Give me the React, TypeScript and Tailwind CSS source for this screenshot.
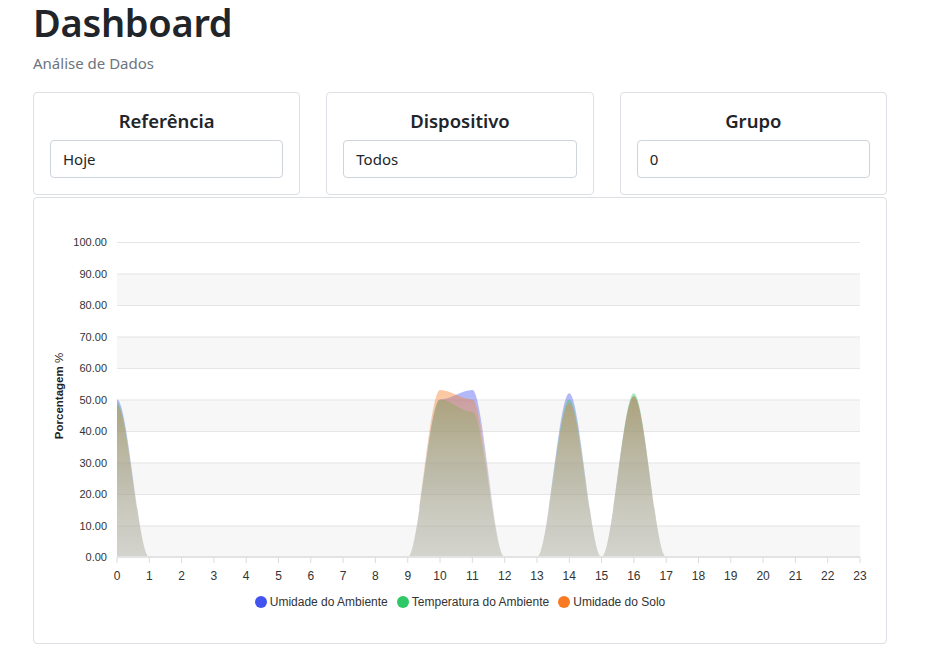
import React from "react";

const sans = "font-['Noto_Sans','Open_Sans',sans-serif]";

const series = [
  { name: "Umidade do Ambiente", color: "#4353f0", data: { 0: 50, 10: 50, 11: 53, 14: 52, 16: 51 } as Record<number, number> },
  { name: "Temperatura do Ambiente", color: "#2ec866", data: { 0: 49, 10: 50, 11: 46, 14: 50, 16: 52 } as Record<number, number> },
  { name: "Umidade do Solo", color: "#f97a22", data: { 0: 48, 10: 53, 11: 50, 14: 49, 16: 51 } as Record<number, number> },
];

const hours = Array.from({ length: 24 }, (_, i) => i);
const px = (h: number) => 83 + (h * 743) / 23;
const py = (v: number) => 359 - v * 3.15;

function areaPath(data: Record<number, number>) {
  const pts = hours.map((h) => [px(h), py(data[h] ?? 0)]);
  let d = `M ${pts[0][0]} ${py(0)} L ${pts[0][0]} ${pts[0][1]}`;
  for (let i = 0; i < pts.length - 1; i++) {
    const [x0, y0] = pts[i];
    const [x1, y1] = pts[i + 1];
    const dx = (x1 - x0) / 3;
    d += ` C ${x0 + dx} ${y0} ${x1 - dx} ${y1} ${x1} ${y1}`;
  }
  d += ` L ${pts[pts.length - 1][0]} ${py(0)} Z`;
  return d;
}

function Chart() {
  const ticks = [0, 10, 20, 30, 40, 50, 60, 70, 80, 90, 100];
  return (
    <svg width="852" height="395" className="block" fontFamily="'Liberation Sans', Arial, sans-serif">
      <defs>
        {series.map((s, i) => (
          <linearGradient key={i} id={`g${i}`} x1="0" y1="0" x2="0" y2="1" gradientUnits="objectBoundingBox">
            <stop offset="0" stopColor={s.color} stopOpacity="0.42" />
            <stop offset="1" stopColor="#b4b4a8" stopOpacity="0.22" />
          </linearGradient>
        ))}
      </defs>
      {[0, 20, 40, 60, 80].map((v) => (
        <rect key={v} x={83} y={py(v + 10)} width={743} height={31.5} fill="#f7f7f7" />
      ))}
      {ticks.map((v) => (
        <line key={v} x1={83} x2={826} y1={py(v) + 0.5} y2={py(v) + 0.5} stroke="#e6e6e6" />
      ))}
      {series.map((s, i) => (
        <path key={s.name} d={areaPath(s.data)} fill={`url(#g${i})`} />
      ))}
      <line x1={83} x2={826} y1={359} y2={359} stroke="#e3e3e3" strokeWidth="2" />
      {hours.map((h) => (
        <line key={h} x1={px(h)} x2={px(h)} y1={359} y2={365} stroke="#dcdcdc" />
      ))}
      {ticks.map((v) => (
        <text key={v} x={73} y={py(v) + 4} fontSize="11" fill="#333" textAnchor="end">
          {v.toFixed(2)}
        </text>
      ))}
      {hours.map((h) => (
        <text key={h} x={px(h)} y={382} fontSize="12" fill="#333" textAnchor="middle">
          {h}
        </text>
      ))}
      <text x={29} y={198} fontSize="11.5" fill="#222" textAnchor="middle" transform="rotate(-90 29 198)">
        <tspan fontWeight="bold">Porcentagem</tspan>
        <tspan> %</tspan>
      </text>
    </svg>
  );
}

const filters = [
  { title: "Referência", value: "Hoje" },
  { title: "Dispositivo", value: "Todos" },
  { title: "Grupo", value: "0" },
];

export default function App() {
  return (
    <div className={`${sans} bg-white min-h-[670px] pl-[33px] pt-[2px] text-[#212529]`}>
      <div className="w-[854px]">
        {/* Header */}
        <h1 className="text-[38px] leading-[40px] font-semibold tracking-[-0.3px]">Dashboard</h1>
        <p className="mt-[11px] text-[15px] leading-[20px] text-[#6c757d]">Análise de Dados</p>

        {/* Filtros */}
        <div className="mt-[19px] grid grid-cols-3 gap-[26px]">
          {filters.map((f) => (
            <div key={f.title} className="border border-[#dcdfe3] rounded-[4px] px-4 pt-4 pb-4">
              <h5 className="text-center text-[18.5px] leading-[24px] font-semibold">{f.title}</h5>
              <div className="mt-[7px] h-[38px] border border-[#ced4da] rounded-[4px] px-3 flex items-center text-[15px]">
                {f.value}
              </div>
            </div>
          ))}
        </div>

        {/* Grafico */}
        <div className="mt-[2px] border border-[#dcdfe3] rounded-[4px] pb-[32px]">
          <Chart />
          <div className="h-[18px] flex items-center justify-center gap-[9px] font-['Liberation_Sans',Arial,sans-serif] text-[12px] text-[#333]">
            {series.map((s) => (
              <div key={s.name} className="flex items-center gap-[3px]">
                <span className="w-[12px] h-[12px] rounded-full" style={{ backgroundColor: s.color }} />
                <span>{s.name}</span>
              </div>
            ))}
          </div>
        </div>
      </div>
    </div>
  );
}
